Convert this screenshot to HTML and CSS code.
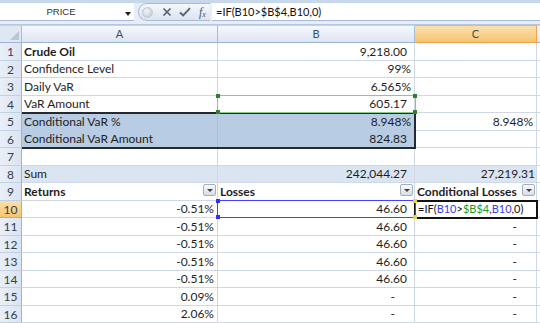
FILE: index.html
```html
<!doctype html>
<html>

<head>

    <link rel="stylesheet" href="styles.css">

</head>

<body>

    <div class="formula-bar">
        <div class="name-box">
            <span class="name">PRICE</span>
            <span class="drop"></span>
        </div>
        <div class="fx-buttons">
            <span class="orb"></span>
            <svg class="btn-icon" width="10" height="10" viewBox="0 0 10 10">
                <path d="M1.5 1.5 L8.5 8.5 M8.5 1.5 L1.5 8.5" stroke="#5a6270" stroke-width="1.7" fill="none"/>
            </svg>
            <svg class="btn-icon" width="12" height="10" viewBox="0 0 12 10">
                <path d="M1 5.5 L4.2 8.5 L11 1.2" stroke="#5a6270" stroke-width="1.9" fill="none"/>
            </svg>
            <span class="fx">f<sub>x</sub></span>
        </div>
        <div class="formula">=IF(B10&gt;$B$4,B10,0)</div>
    </div>

    <div class="sheet-wrap">
        <div class="sheet">
            <!-- column headers -->
            <div class="corner"><span class="corner-tri"></span></div>
            <div class="col-head">A</div>
            <div class="col-head">B</div>
            <div class="col-head active">C</div>
            <div class="col-head"></div>

            <div class="rh">1</div>
            <div class="c b">Crude Oil</div>
            <div class="c num">9,218.00</div>
            <div class="c"></div>
            <div class="c"></div>

            <div class="rh">2</div>
            <div class="c">Confidence Level</div>
            <div class="c pct">99%</div>
            <div class="c"></div>
            <div class="c"></div>

            <div class="rh">3</div>
            <div class="c">Daily VaR</div>
            <div class="c pct">6.565%</div>
            <div class="c"></div>
            <div class="c"></div>

            <div class="rh">4</div>
            <div class="c">VaR Amount</div>
            <div class="c num">605.17</div>
            <div class="c"></div>
            <div class="c"></div>

            <div class="rh">5</div>
            <div class="c sel">Conditional VaR %</div>
            <div class="c sel pct">8.948%</div>
            <div class="c pct">8.948%</div>
            <div class="c"></div>

            <div class="rh">6</div>
            <div class="c sel">Conditional VaR Amount</div>
            <div class="c sel num">824.83</div>
            <div class="c"></div>
            <div class="c"></div>

            <div class="rh">7</div>
            <div class="c"></div>
            <div class="c"></div>
            <div class="c"></div>
            <div class="c"></div>

            <div class="rh">8</div>
            <div class="c sum">Sum</div>
            <div class="c sum num">242,044.27</div>
            <div class="c sum tight">27,219.31</div>
            <div class="c"></div>

            <div class="rh">9</div>
            <div class="c b">Returns<span class="filter"></span></div>
            <div class="c b">Losses<span class="filter"></span></div>
            <div class="c b">Conditional Losses<span class="filter"></span></div>
            <div class="c"></div>

            <div class="rh active">10</div>
            <div class="c pct">-0.51%</div>
            <div class="c num">46.60</div>
            <div class="c edit">=IF(<span class="ref-blue">B10</span>&gt;<span class="ref-green">$B$4</span>,<span class="ref-blue">B10</span>,0)</div>
            <div class="c"></div>

            <div class="rh">11</div>
            <div class="c pct">-0.51%</div>
            <div class="c num">46.60</div>
            <div class="c dash">-</div>
            <div class="c"></div>

            <div class="rh">12</div>
            <div class="c pct">-0.51%</div>
            <div class="c num">46.60</div>
            <div class="c dash">-</div>
            <div class="c"></div>

            <div class="rh">13</div>
            <div class="c pct">-0.51%</div>
            <div class="c num">46.60</div>
            <div class="c dash">-</div>
            <div class="c"></div>

            <div class="rh">14</div>
            <div class="c pct">-0.51%</div>
            <div class="c num">46.60</div>
            <div class="c dash">-</div>
            <div class="c"></div>

            <div class="rh">15</div>
            <div class="c pct">0.09%</div>
            <div class="c dash">-</div>
            <div class="c dash">-</div>
            <div class="c"></div>

            <div class="rh">16</div>
            <div class="c pct">2.06%</div>
            <div class="c dash">-</div>
            <div class="c dash">-</div>
            <div class="c"></div>
        </div>

        <!-- borders drawn over the cells, on a grid of the same shape -->
        <div class="sheet overlay">
            <div class="range-box"></div>
            <div class="ref-box green-box">
                <i class="handle tl"></i><i class="handle tr"></i><i class="handle bl"></i><i class="handle br"></i>
            </div>
            <div class="ref-box blue-box">
                <i class="handle tl"></i><i class="handle tr"></i><i class="handle bl"></i><i class="handle br"></i>
            </div>
            <div class="active-box"></div>
        </div>
    </div>

</body>

</html>
```

FILE: styles.css
```css
body {
    margin: 0;
    width: 540px;
    height: 323px;
    overflow: hidden;
    background: #ffffff;
    font-family: Lato, "Liberation Sans", sans-serif;
    color: #1e1e1e;
}

/* formula bar */

.formula-bar {
    display: flex;
    height: 25px;
    box-sizing: border-box;
    padding: 3px 0 3px 0;
    background: linear-gradient(#c7d7ec 0, #c7d7ec 3px, #e6edf6 3px);
    border-bottom: 1px solid #b7c8de;
}

.name-box {
    position: relative;
    width: 134px;
    background: #ffffff;
    border-bottom: 1px solid #a9bbd4;
    display: flex;
    align-items: center;
}

.name {
    width: 118px;
    text-align: center;
    font-family: "Liberation Sans", sans-serif;
    font-size: 9.5px;
    color: #333;
    padding-left: 2px;
}

.drop {
    position: absolute;
    left: 125px;
    top: 9px;
    width: 0;
    height: 0;
    border-left: 3.5px solid transparent;
    border-right: 3.5px solid transparent;
    border-top: 4px solid #222;
}

.fx-buttons {
    display: flex;
    align-items: center;
    gap: 7px;
    margin-left: 4px;
    width: 72px;
    box-sizing: border-box;
    padding-left: 3px;
    border: 1px solid #aabbd3;
    border-right: none;
    border-radius: 10px 0 0 10px;
    background: linear-gradient(#f4f7fb, #dbe4f0);
}

.orb {
    width: 9px;
    height: 9px;
    border-radius: 50%;
    background: radial-gradient(circle at 40% 35%, #f4f6f9, #b9c1cc);
    border: 1px solid #c2c9d3;
    margin-right: 2px;
}

.btn-icon {
    display: block;
}

.fx {
    font-family: "Liberation Serif", serif;
    font-style: italic;
    font-size: 12px;
    color: #4f5763;
    margin-left: 1px;
}

.fx sub {
    font-size: 8px;
    vertical-align: -1px;
}

.formula {
    flex: 1;
    margin-left: 2px;
    background: #ffffff;
    border-bottom: 1px solid #a9bbd4;
    padding-left: 4px;
    font-size: 11px;
    line-height: 18px;
    color: #111;
}

/* sheet grid */

.sheet-wrap {
    position: relative;
}

.sheet {
    display: grid;
    grid-template-columns: 22px 196px 197px 122px 1fr;
    grid-template-rows: 18px repeat(16, 17.5px);
    font-size: 12px;
}

.overlay {
    position: absolute;
    inset: 0;
    pointer-events: none;
}

.corner,
.col-head {
    box-sizing: border-box;
    background: linear-gradient(#f5f8fc, #dce5f1);
    border-right: 1px solid #a6bbd4;
    border-bottom: 1px solid #9eb4cf;
    border-top: 1px solid #c3d2e5;
    text-align: center;
    font-size: 11px;
    line-height: 16px;
    color: #3e4c60;
}

.corner {
    position: relative;
    background: #dfe7f2;
}

.corner-tri {
    position: absolute;
    right: 2px;
    bottom: 2px;
    width: 0;
    height: 0;
    border-left: 9px solid transparent;
    border-bottom: 9px solid #b9c6d8;
}

.col-head.active {
    background: linear-gradient(#fbe0ad, #f5c570);
    border-right-color: #eea04a;
    border-bottom-color: #eea04a;
    border-top-color: #f3b463;
}

.rh {
    box-sizing: border-box;
    background: linear-gradient(90deg, #e9eff8, #dbe4f0);
    border-right: 1px solid #9eb4cf;
    border-bottom: 1px solid #c2d0e3;
    text-align: center;
    font-size: 12px;
    line-height: 17px;
    color: #33404f;
}

.rh.active {
    background: linear-gradient(#fbe0ad, #f5c570);
    border-right-color: #eea04a;
    border-bottom-color: #eea04a;
}

.c {
    position: relative;
    box-sizing: border-box;
    display: flex;
    align-items: flex-end;
    padding: 0 3px 1px 2px;
    border-right: 1px solid #d0d7e5;
    border-bottom: 1px solid #d0d7e5;
    line-height: 15px;
    white-space: nowrap;
}

.b {
    font-weight: bold;
}

.num {
    justify-content: flex-end;
    padding-right: 7px;
}

.pct {
    justify-content: flex-end;
    padding-right: 3px;
}

.tight {
    justify-content: flex-end;
    padding-right: 1px;
}

.dash {
    justify-content: flex-end;
    padding-right: 19px;
}

.sel {
    background: #b8cce4;
    border-bottom-color: #b8cce4;
    border-right-color: #a9bed8;
}

.sum {
    background: #dbe5f1;
    border-bottom-color: #d0d9e7;
    border-right-color: #cdd7e6;
}

.filter {
    position: absolute;
    right: 1px;
    top: 1px;
    width: 13px;
    height: 12px;
    box-sizing: border-box;
    border: 1px solid #a5aebb;
    border-radius: 2px;
    background: linear-gradient(#fbfcfd, #d8dde4);
}

.filter::after {
    content: "";
    position: absolute;
    left: 3px;
    top: 4px;
    border-left: 3px solid transparent;
    border-right: 3px solid transparent;
    border-top: 3px solid #3c3f44;
}

.edit {
    padding-left: 3px;
    font-size: 11px;
    color: #111;
}

.ref-blue {
    color: #3a3af0;
}

.ref-green {
    color: #1e9a1e;
}

/* overlays placed on the grid over the cells */

.range-box {
    grid-column: 2 / 4;
    grid-row: 6 / 8;
    margin: -1px -1px -1px 0;
    border: 2px solid #262a30;
    border-left: none;
}

.ref-box {
    position: relative;
    margin: -1px -1px 0 -1px;
}

.green-box {
    grid-column: 3;
    grid-row: 5;
    border: 1px solid #86cc86;
}

.blue-box {
    grid-column: 3;
    grid-row: 11;
    border: 1px solid #4040ff;
}

.handle {
    position: absolute;
    width: 4px;
    height: 4px;
}

.green-box .handle {
    background: #2f7f2f;
}

.blue-box .handle {
    background: #3030ff;
}

.blue-box .handle.tr,
.blue-box .handle.br {
    background: #e9d54a;
}

.tl {
    left: -2px;
    top: -2px;
}

.tr {
    right: -2px;
    top: -2px;
}

.bl {
    left: -2px;
    bottom: -2px;
}

.br {
    right: -2px;
    bottom: -2px;
}

.active-box {
    grid-column: 4;
    grid-row: 11;
    margin: -1px;
    border: 2px solid #111;
}
```
